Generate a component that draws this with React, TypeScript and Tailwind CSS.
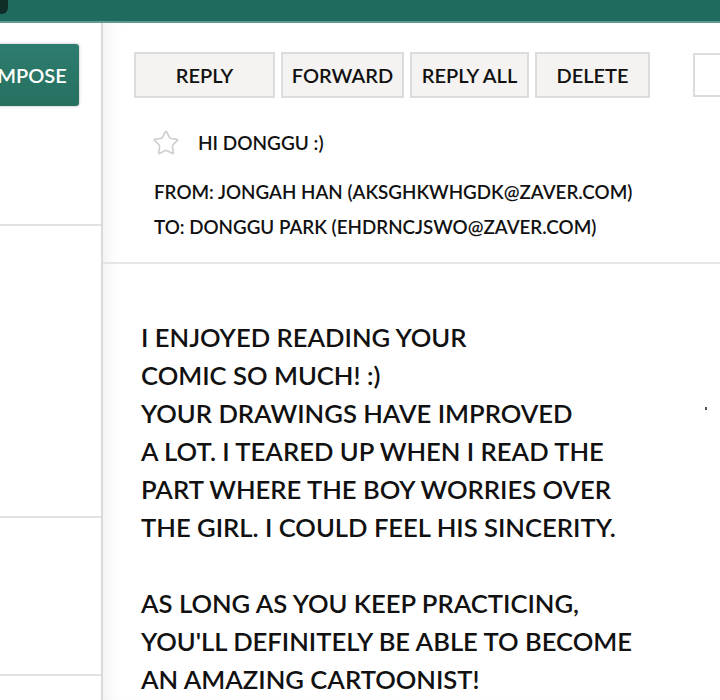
import { Star } from 'lucide-react'

const font = { fontFamily: 'Lato, "Open Sans", sans-serif' }

function ToolButton({ label, width }: { label: string; width: string }) {
  return (
    <button
      className={`${width} h-[46px] shrink-0 bg-[#f4f3f2] border-2 border-[#dcdcdc] text-[20px] font-semibold text-[#111]`}
    >
      {label}
    </button>
  )
}

export default function App() {
  const body = [
    'I ENJOYED READING YOUR',
    'COMIC SO MUCH! :)',
    'YOUR DRAWINGS HAVE IMPROVED',
    'A LOT. I TEARED UP WHEN I READ THE',
    'PART WHERE THE BOY WORRIES OVER',
    'THE GIRL. I COULD FEEL HIS SINCERITY.',
    '',
    'AS LONG AS YOU KEEP PRACTICING,',
    "YOU'LL DEFINITELY BE ABLE TO BECOME",
    'AN AMAZING CARTOONIST!',
  ]

  return (
    <div className="w-[720px] h-[700px] overflow-hidden bg-white flex flex-col" style={font}>
      {/* Top bar */}
      <div className="h-[23px] shrink-0 bg-[#1f6c5f] border-b-2 border-[#5d9a8f] relative">
        <div className="absolute left-0 top-0 w-[8px] h-[14px] bg-[#0f2e28] rounded-br-md" />
      </div>

      <div className="flex flex-1 min-h-0">
        {/* Sidebar */}
        <div className="w-[103px] shrink-0 border-r-2 border-[#dadada] overflow-hidden flex flex-col">
          <div className="h-[203px] shrink-0 border-b-2 border-[#e2e2e2] pt-[21px]">
            <button className="ml-[-44px] w-[123px] h-[62px] rounded-[3px] bg-gradient-to-b from-[#2e7d70] to-[#26705f] text-white text-[20px] font-semibold shadow-[0_0_3px_rgba(0,0,0,0.3)]">
              COMPOSE
            </button>
          </div>
          <div className="h-[292px] shrink-0 border-b-2 border-[#e2e2e2]" />
          <div className="h-[158px] shrink-0 border-b-2 border-[#e2e2e2]" />
        </div>

        {/* Main */}
        <div className="flex-1 min-w-0 flex flex-col shadow-[inset_14px_0_18px_-12px_rgba(0,0,0,0.08)]">
          <div className="flex items-center pt-[29px] pl-[31px] gap-[6px]">
            <ToolButton label="REPLY" width="w-[141px]" />
            <ToolButton label="FORWARD" width="w-[123px]" />
            <ToolButton label="REPLY ALL" width="w-[119px]" />
            <ToolButton label="DELETE" width="w-[115px]" />
            <div className="ml-[37px] w-[60px] h-[44px] shrink-0 border-2 border-r-0 border-[#dcdcdc] bg-white" />
          </div>

          <div className="border-b-2 border-[#e6e6e6] pl-[49px] pb-[18px] text-[#111]">
            <div className="flex items-center mt-[30px] h-[30px]">
              <Star className="w-[28px] h-[28px] text-[#cfcfcf]" strokeWidth={1.4} />
              <span className="ml-[18px] text-[19px] font-semibold">HI DONGGU :)</span>
            </div>
            <div className="mt-[16px] pl-[2px] text-[18.8px] font-semibold leading-[35px]">
              <div>FROM: JONGAH HAN (AKSGHKWHGDK@ZAVER.COM)</div>
              <div>TO: DONGGU PARK (EHDRNCJSWO@ZAVER.COM)</div>
            </div>
          </div>

          <div className="pt-[54px] pl-[38px] text-[25.6px] font-semibold leading-[38px] text-[#111] relative">
            {body.map((line, i) => (
              <div key={i} className="h-[38px] whitespace-nowrap">
                {line}
              </div>
            ))}
            <div className="absolute left-[602px] top-[143px] w-[2px] h-[3px] bg-[#555]" />
          </div>
        </div>
      </div>
    </div>
  )
}
